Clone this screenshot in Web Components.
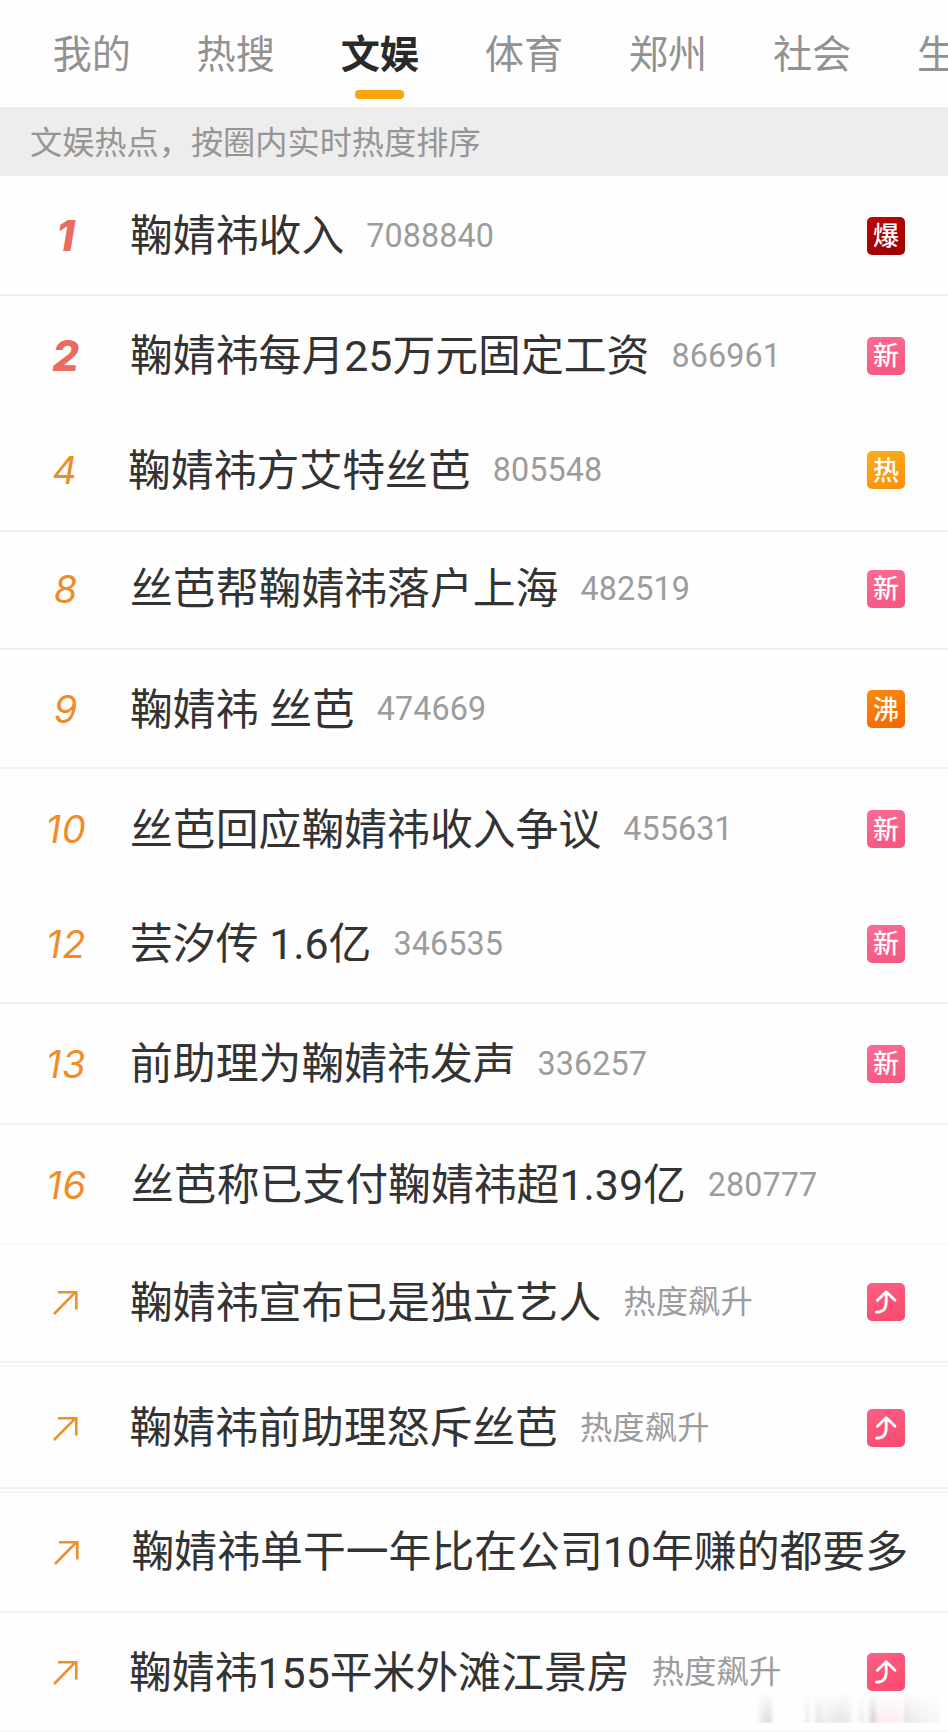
<!DOCTYPE html>
<html lang="zh-CN">
<head>
<meta charset="utf-8">
<title>文娱热点</title>
<style>
html,body{margin:0;padding:0;background:#fefefe}
body{width:948px;height:1732px;overflow:hidden;font-family:Roboto,"Noto Sans CJK SC",sans-serif}
</style>
</head>
<body>
<hot-board></hot-board>
<script>
class TabBar extends HTMLElement{
  connectedCallback(){
    const r=this.attachShadow({mode:'open'});
    const tabs=['我的','热搜','文娱','体育','郑州','社会','生'];
    r.innerHTML=`<style>
:host{display:block;height:107px;overflow:hidden;background:#fefefe}
nav{display:flex;gap:65.7px;padding:27px 0 0 52.500px;width:1200px}
.t{display:flex;flex-direction:column;align-items:center;flex:none;width:78.4px;font-size:39.2px;line-height:56px;color:#929292;white-space:nowrap}
.t:last-child{align-items:flex-start}
.on{color:#2a2a2a;font-weight:700}
.on::after{content:"";width:49px;height:9px;border-radius:4px;background:#f9a50b;margin-top:7px}
</style><nav>${tabs.map(t=>`<span class="t${t==='文娱'?' on':''}">${t}</span>`).join('')}</nav>`;
  }
}
customElements.define('tab-bar',TabBar);

class HintBar extends HTMLElement{
  connectedCallback(){
    this.attachShadow({mode:'open'}).innerHTML=`<style>
:host{display:flex;align-items:center;height:69px;box-sizing:border-box;padding:3px 0 0 30px;background:#ededed;color:#959595;font-size:32.2px;line-height:40px;white-space:nowrap}
</style><slot></slot>`;
  }
}
customElements.define('hint-bar',HintBar);

class HotBadge extends HTMLElement{
  connectedCallback(){
    const k=this.getAttribute('kind');
    const c={'爆':'#b80a06,#9c0003','新':'#fb6c95,#f4567c','热':'#fbae1c,#f98f0c','沸':'#fb8a0c,#f46504','升':'#fb5f86,#f94a6c'}[k];
    const inner=k==='升'
      ?`<svg width="38" height="38" viewBox="0 0 38 38" fill="none" stroke="#fff" stroke-width="2.800" stroke-linecap="round" stroke-linejoin="round"><path d="M9.500 29.200C16 29.200 19.200 25.500 19.200 19V9M10.500 17.200L19.200 8.800L28 17.200"/></svg>`
      :`<span>${k}</span>`;
    this.attachShadow({mode:'open'}).innerHTML=`<style>
:host{display:flex;align-items:center;justify-content:center;width:38px;height:38px;border-radius:5px;background:linear-gradient(160deg,${c});color:#fff;font-size:26px;line-height:38px;font-weight:500}
span{padding-top:1px}
svg{display:block}
</style>${inner}`;
  }
}
customElements.define('hot-badge',HotBadge);

class HotRow extends HTMLElement{
  connectedCallback(){
    const g=n=>this.getAttribute(n)||'';
    const rank=g('rank'),dx=+g('dx');
    const mark=rank?`<b class="${+rank<3?'top':''}">${rank}</b>`
      :`<svg width="28" height="28" viewBox="0 0 28 28" fill="none" stroke="#ee8f2a" stroke-width="2.600"><path d="M2 26L23.500 4.200M6 4.200H24.300V21.500"/></svg>`;
    this.attachShadow({mode:'open'}).innerHTML=`<style>
:host{display:block;box-sizing:border-box;height:${g('h')}px;border-bottom:${g('line')?`2px solid ${g('line')}`:'0'};${g('echo')?'background:linear-gradient(#f5f5f5,#f5f5f5) 0 2px/100% 2px no-repeat;':''}padding-top:${g('c')-30}px}
.r{display:flex;align-items:center;height:60px;padding-right:43px;white-space:nowrap}
.m{flex:none;width:${130+dx}px;display:flex;box-sizing:border-box;justify-content:center;padding-left:${2+dx}px}
.m>*{margin-right:${dx}px}
b{font-family:Inter,Roboto,sans-serif;font-weight:400;font-style:italic;font-size:38px;letter-spacing:.8px;line-height:60px;color:#f08c28}
b.top{font-weight:800;font-size:42px;color:#ec6b60}
.t{font-size:42.850px;line-height:60px;color:#333;flex:none;padding-top:1px}
.v{font-size:32.300px;letter-spacing:.1px;line-height:60px;color:#9c9c9c;margin-left:22px;flex:1}
</style><div class="r"><div class="m">${mark}</div><span class="t">${g('text')}</span><span class="v">${g('value')}</span>${g('badge')?`<hot-badge kind="${g('badge')}"></hot-badge>`:''}</div>`;
  }
}
customElements.define('hot-row',HotRow);

class BlurMark extends HTMLElement{
  connectedCallback(){
    this.attachShadow({mode:'open'}).innerHTML=`<style>
:host{position:absolute;left:756px;top:1692px;width:188px;height:31px;overflow:hidden}
div{height:31px;background:linear-gradient(90deg,transparent 0,#ccc8 5%,#bbb8 8%,transparent 12%,transparent 30%,#ccc6 33%,transparent 36%,#bbb6 40%,#ccc4 44%,#ccc6 50%,#bbb6 54%,#ccc6 59%,transparent 63%,#ccc5 68%,#eee3 71%,#aaa9 75%,#fcd9e088 78%,#fde2e788 92%,transparent 100%) 0 0/156px 100% no-repeat,linear-gradient(90deg,#bbb9,#ccc6 18%,#ddd5 60%,#ddd3) 148px 0/36px 100% no-repeat;-webkit-mask:linear-gradient(transparent,#000);filter:blur(1px)}
</style><div></div>`;
  }
}
customElements.define('blur-mark',BlurMark);

class HotBoard extends HTMLElement{
  connectedCallback(){
    const L='#f1f1f1';
    const rows=[
      ['1','鞠婧祎收入','7088840','爆',120,59.5,0,L],
      ['2','鞠婧祎每月25万元固定工资','866961','新',116,59.5,0,''],
      ['4','鞠婧祎方艾特丝芭','805548','热',120,58,-2,L],
      ['8','丝芭帮鞠婧祎落户上海','482519','新',118,56.5,0,L],
      ['9','鞠婧祎 丝芭','474669','沸',119,59,0,L],
      ['10','丝芭回应鞠婧祎收入争议','455631','新',117,60,0,''],
      ['12','芸汐传 1.6亿','346535','新',118,57.5,0,L],
      ['13','前助理为鞠婧祎发声','336257','新',121,59.5,0,L],
      ['16','丝芭称已支付鞠婧祎超1.39亿','280777','',120,59.5,1,'#fafafa'],
      ['','鞠婧祎宣布已是独立艺人','热度飙升','升',118,57,0,L],
      ['','鞠婧祎前助理怒斥丝芭','热度飙升','升',126,64.5,-0.5,L,1],
      ['','鞠婧祎单干一年比在公司10年赚的都要多','','',124,62.5,1.5,L,1],
      ['','鞠婧祎155平米外滩江景房','热度飙升','升',119,59,-1,'#f8f8f8']
    ];
    this.attachShadow({mode:'open'}).innerHTML=`<style>
:host{display:block;position:relative;width:948px;height:1732px;overflow:hidden}
main{display:flex;flex-direction:column}
</style><tab-bar></tab-bar><hint-bar>文娱热点，按圈内实时热度排序</hint-bar><main>${rows.map(r=>`<hot-row rank="${r[0]}" text="${r[1]}" value="${r[2]}" badge="${r[3]}" h="${r[4]}" c="${r[5]}" dx="${r[6]}" line="${r[7]}" echo="${r[8]||''}"></hot-row>`).join('')}</main><blur-mark></blur-mark>`;
  }
}
customElements.define('hot-board',HotBoard);
</script>
</body>
</html>
